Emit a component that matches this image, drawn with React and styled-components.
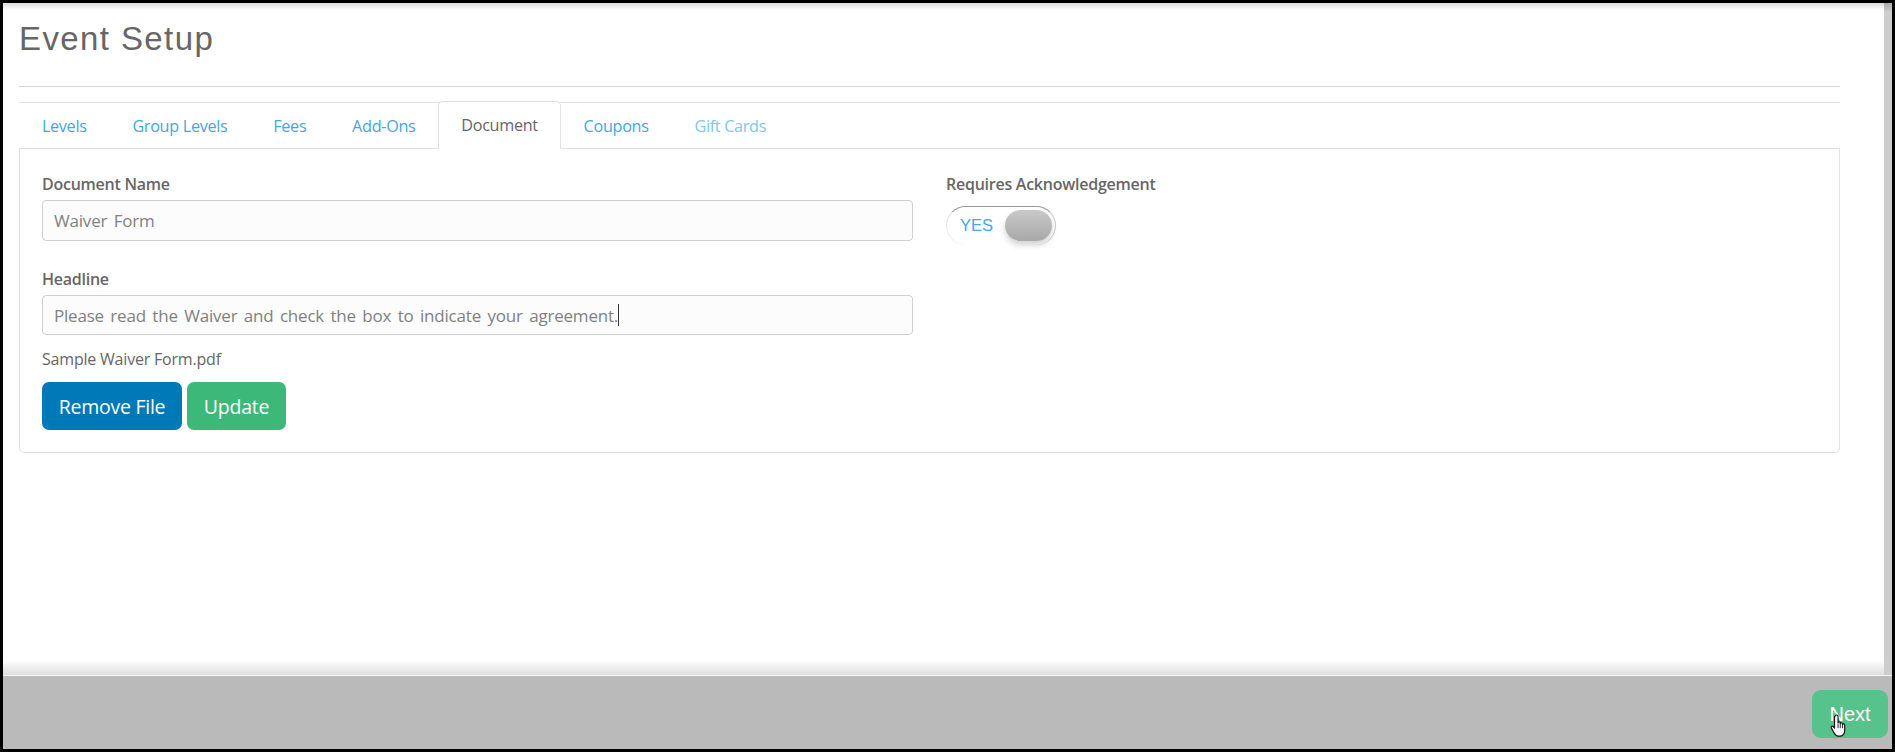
import React from "react";
import styled, { createGlobalStyle } from "styled-components";

const Global = createGlobalStyle`
  html, body { margin: 0; padding: 0; height: 100%; background: #000; }
  #root { height: 100%; }
  * { box-sizing: border-box; }
`;
const UI = `"Open Sans", "Noto Sans", sans-serif`;
const Frame = styled.div`
  width: 1895px; height: 752px; padding: 3px; background: #000;
  display: flex; flex-direction: column; overflow: hidden;
`;
const Body = styled.div`flex: 1; display: flex; min-height: 0;`;
const Main = styled.main`
  flex: 1; padding: 0 44px 0 16px;
  background: linear-gradient(rgba(0,0,0,.14), rgba(0,0,0,0) 7px), linear-gradient(to top, rgba(0,0,0,.13), rgba(0,0,0,0) 15px), #fff;
  font-family: ${UI}; color: #666;
`;
const Scrollbar = styled.div`
  width: 8px; background: linear-gradient(#a9a9a9, #cdcdcd 9px);
`;
const Title = styled.h1`
  margin: 0; height: 84px; padding-top: 17px;
  font: 400 33px/38px "Liberation Sans", sans-serif; letter-spacing: 1.4px; color: #666;
  border-bottom: 1px solid #d5d5d5;
`;
const Tabs = styled.nav`
  margin-top: 15px; height: 47px; display: flex; align-items: flex-end;
  border-top: 1px solid #dee2e6; border-bottom: 1px solid #dee2e6;
`;
const Tab = styled.a`
  height: 47px; margin-bottom: -1px; padding: 0 22.9px; display: flex; align-items: center;
  font-size: 16.2px; letter-spacing: -0.3px;
  color: ${p => p.$active ? "#666" : p.$muted ? "#7cc8ef" : "#3fa7e6"};
  ${p => p.$active ? `
    background: #fff; border: 1px solid #dee2e6; border-bottom-color: #fff;
    border-radius: 5px 5px 0 0; margin-top: -2px; height: 48px; padding: 0 21.9px;
  ` : ""}
`;
const Panel = styled.section`
  height: 304px; padding: 22px 22px 0; border: 1px solid #dee2e6; border-top: 0;
  border-radius: 0 0 5px 5px; display: grid; grid-template-columns: 871px 1fr; column-gap: 33px;
`;
const Column = styled.div`display: flex; flex-direction: column;`;
const Label = styled.label`
  display: block; height: 24px; line-height: 26px; font-size: 16px; letter-spacing: -0.25px; font-weight: 600; color: #666;
`;
const Field = styled.div`
  height: ${p => p.$h}px; margin: 5px 0 ${p => p.$mb}px; padding: 0 11px; display: flex; align-items: center;
  border: 1px solid #cfcfcf; border-radius: 4px; background: #fcfcfc;
  font-size: 17px; letter-spacing: -0.2px; word-spacing: 2.2px; color: #818181;
`;
const Caret = styled.span`display: inline-block; width: 1px; height: 22px; background: #333;`;
const FileName = styled.div`height: 24px; margin-top: 12px; line-height: 24px; font-size: 16px; letter-spacing: -0.2px; color: #666;`;
const Actions = styled.div`display: flex; gap: 5px; margin-top: 11px;`;
const Button = styled.button`
  height: 48px; width: ${p => p.$w}px; padding: 0; border: 0; border-radius: 7px;
  font: 400 19.5px ${UI}; letter-spacing: -0.25px; color: #fff; background: ${p => p.$bg};
`;
const Toggle = styled.div`
  width: 110px; height: 39px; margin-top: 11px; padding: 3px 3px 0 13px; display: flex; justify-content: space-between;
  border-radius: 20px; border-top: 1px solid #999; border-left: 1px solid #e4e4e4; border-right: 1px solid #ccc;
  font: 400 16.5px/30px "Liberation Sans", sans-serif; color: #45a6ee;
`;
const Knob = styled.div`
  width: 47px; height: 31px; border-radius: 16px;
  background: linear-gradient(#c9c9c9, #a8a8a8); box-shadow: 0 4px 6px rgba(0,0,0,.18);
`;
const Footer = styled.footer`
  height: 74px; flex: none; padding: 14px 4px 0 0; display: flex; justify-content: flex-end;
  background: #bababa; border-top: 1px solid #f4f4f4;
`;
const Next = styled.button`
  width: 76px; height: 48px; padding: 0; border: 0; border-radius: 9px;
  font: 400 20px "Liberation Sans", sans-serif; color: #fff; background: #57c28c; position: relative;
`;
const Cursor = styled.svg`position: absolute; left: 18px; top: 24px;`;

export default function App() {
  return (
    <Frame>
      <Global />
      <Body>
        <Main>
          <Title>Event Setup</Title>
          <Tabs>
            <Tab>Levels</Tab>
            <Tab>Group Levels</Tab>
            <Tab>Fees</Tab>
            <Tab>Add-Ons</Tab>
            <Tab $active>Document</Tab>
            <Tab>Coupons</Tab>
            <Tab $muted>Gift Cards</Tab>
          </Tabs>
          <Panel>
            <Column>
              <Label>Document Name</Label>
              <Field $h={41} $mb={25}>Waiver Form</Field>
              <Label>Headline</Label>
              <Field $h={40} $mb={0}>Please read the Waiver and check the box to indicate your agreement.<Caret /></Field>
              <FileName>Sample Waiver Form.pdf</FileName>
              <Actions>
                <Button $w={140} $bg="#0079b8">Remove File</Button>
                <Button $w={99} $bg="#3cb878">Update</Button>
              </Actions>
            </Column>
            <Column>
              <Label>Requires Acknowledgement</Label>
              <Toggle>YES<Knob /></Toggle>
            </Column>
          </Panel>
        </Main>
        <Scrollbar />
      </Body>
      <Footer>
        <Next>
          Next
          <Cursor width="17" height="23" viewBox="0 0 19 26">
            <path d="M6 2c1-1.500 3-1 3 1v7c0-1.500 2.500-1.500 2.500 0v1c0-1.500 2.500-1.500 2.500 0v1c0-1.500 2.500-1 2.500.5V19c0 3-2 6-5 6H9c-2.500 0-3.500-2-5-4.500L1.500 16c-1-2 1-3 2.500-1.500L5 16V3z" fill="#fff" stroke="#111" strokeWidth="1.300" strokeLinejoin="round" />
            <path d="M9 11v5M11.500 11v5M14 12v4" stroke="#111" strokeWidth="1" fill="none" />
          </Cursor>
        </Next>
      </Footer>
    </Frame>
  );
}
